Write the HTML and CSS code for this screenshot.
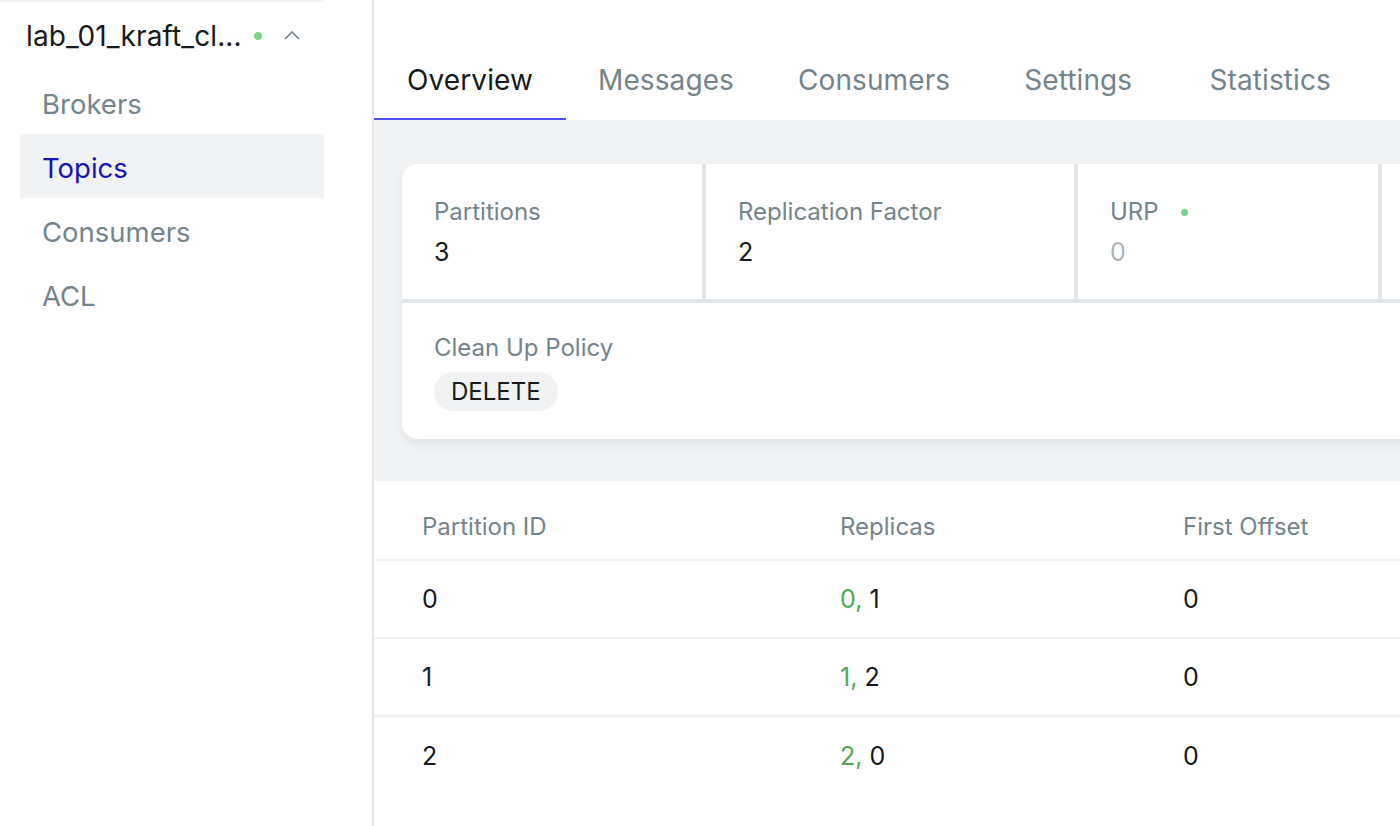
FILE: index.html
```html
<!DOCTYPE html>
<html lang="en">
<head>
<meta charset="utf-8">
<title>Topic overview</title>
<link rel="stylesheet" href="styles.css">
</head>
<body>
<aside class="sidebar">
  <div class="sidebar-top"></div>
  <div class="cluster">
    <span class="cluster-name">lab_01_kraft_cl...</span>
    <span class="dot"></span>
    <svg class="chevron" width="16" height="10" viewBox="0 0 16 10"><path d="M1.5 8.5 L8 2 L14.5 8.5" fill="none" stroke="#73848C" stroke-width="1.7" stroke-linecap="round" stroke-linejoin="round"/></svg>
  </div>
  <nav class="menu">
    <div class="menu-item">Brokers</div>
    <div class="menu-item active">Topics</div>
    <div class="menu-item">Consumers</div>
    <div class="menu-item">ACL</div>
  </nav>
</aside>
<main class="main">
  <div class="tabs">
    <div class="tab active">Overview</div>
    <div class="tab">Messages</div>
    <div class="tab">Consumers</div>
    <div class="tab">Settings</div>
    <div class="tab">Statistics</div>
  </div>
  <section class="overview">
    <div class="metrics">
      <div class="metrics-row">
        <div class="metric w300">
          <div class="label">Partitions</div>
          <div class="value">3</div>
        </div>
        <div class="metric w368">
          <div class="label">Replication Factor</div>
          <div class="value">2</div>
        </div>
        <div class="metric w300">
          <div class="label">URP <span class="dot small"></span></div>
          <div class="value muted">0</div>
        </div>
        <div class="metric w300">
          <div class="label">&nbsp;</div>
          <div class="value">&nbsp;</div>
        </div>
      </div>
      <div class="metric wide">
        <div class="label">Clean Up Policy</div>
        <div class="tag">DELETE</div>
      </div>
    </div>
  </section>
  <table class="partitions">
    <thead>
      <tr><th class="c1">Partition ID</th><th class="c2">Replicas</th><th>First Offset</th></tr>
    </thead>
    <tbody>
      <tr><td>0</td><td><span class="leader">0,</span> 1</td><td>0</td></tr>
      <tr><td>1</td><td><span class="leader">1,</span> 2</td><td>0</td></tr>
      <tr><td>2</td><td><span class="leader">2,</span> 0</td><td>0</td></tr>
    </tbody>
  </table>
</main>
</body>
</html>
```

FILE: styles.css
```css
* { box-sizing: border-box; }
html, body { margin: 0; padding: 0; }
body {
  width: 1400px;
  height: 826px;
  overflow: hidden;
  display: flex;
  font-family: Inter, "Noto Sans", sans-serif;
  color: #171A1C;
  background: #fff;
}
.sidebar {
  width: 374px;
  flex: none;
  border-right: 2px solid #E3E6E8;
}
.sidebar-top {
  width: 324px;
  height: 2px;
  background: #F1F2F3;
}
.cluster {
  height: 68px;
  display: flex;
  align-items: center;
  padding-left: 26px;
}
.cluster-name {
  font-size: 28px;
  letter-spacing: 0.1px;
  color: #171A1C;
}
.dot {
  width: 8px;
  height: 8px;
  border-radius: 50%;
  background: #7CD38C;
  margin-left: 12px;
  display: inline-block;
}
.chevron { margin-left: 22px; margin-top: -2px; }
.menu { margin-left: 20px; width: 304px; }
.menu-item {
  height: 64px;
  display: flex;
  align-items: center;
  padding: 3px 0 0 22px;
  font-size: 27.5px;
  color: #73848C;
}
.menu-item.active {
  background: #F1F2F3;
  color: #1414B8;
}
.main {
  flex: 1;
  min-width: 0;
  overflow: hidden;
  display: flex;
  flex-direction: column;
}
.tabs {
  height: 120px;
  padding-top: 40px;
  display: flex;
  flex: none;
}
.tab {
  min-width: 192px;
  padding: 2px 32px 0;
  height: 80px;
  display: flex;
  align-items: center;
  justify-content: center;
  font-size: 28px;
  letter-spacing: 0.1px;
  color: #73848C;
  border-bottom: 2px solid transparent;
}
.tab.active {
  color: #171A1C;
  border-bottom-color: #4F4FFF;
}
.overview {
  background: #F1F2F3;
  padding: 44px 0 42px 28px;
  flex: none;
}
.metrics {
  width: 1320px;
  display: flex;
  flex-direction: column;
  gap: 4px;
  background: #E3E6E8;
  border-radius: 16px 0 0 16px;
  overflow: hidden;
  box-shadow: 0 6px 10px rgba(0, 0, 0, 0.06);
}
.metrics-row { display: flex; gap: 4px; }
.metric {
  background: #fff;
  padding: 33px 32px 32px;
}
.w300 { width: 300px; }
.w368 { width: 368px; }
.metric.wide { padding: 30px 32px 28px; }
.label {
  font-size: 24px;
  line-height: 30px;
  color: #73848C;
  display: flex;
  align-items: center;
}
.dot.small { width: 7px; height: 7px; margin-left: 22px; }
.value {
  margin-top: 10px;
  font-size: 25px;
  line-height: 30px;
  color: #171A1C;
}
.value.muted { color: #ABB5BA; }
.tag {
  margin-top: 9px;
  display: inline-flex;
  align-items: center;
  height: 39px;
  padding: 0 17px;
  border-radius: 20px;
  background: #F1F2F3;
  font-size: 24px;
  color: #171A1C;
}
.partitions {
  border-collapse: collapse;
  width: 100%;
  table-layout: fixed;
}
.partitions th {
  text-align: left;
  font-weight: 400;
  font-size: 24px;
  color: #73848C;
  height: 79px;
  padding: 12px 0 0 48px;
  border-bottom: 2px solid #F1F2F3;
}
.partitions th.c1 { width: 418px; }
.partitions th.c2 { width: 343px; }
.partitions td {
  font-size: 25px;
  height: 78px;
  padding: 0 0 0 48px;
  border-bottom: 2px solid #F1F2F3;
  color: #171A1C;
}
.partitions tbody tr:last-child td { border-bottom: none; }
.leader { color: #52A852; }
```
